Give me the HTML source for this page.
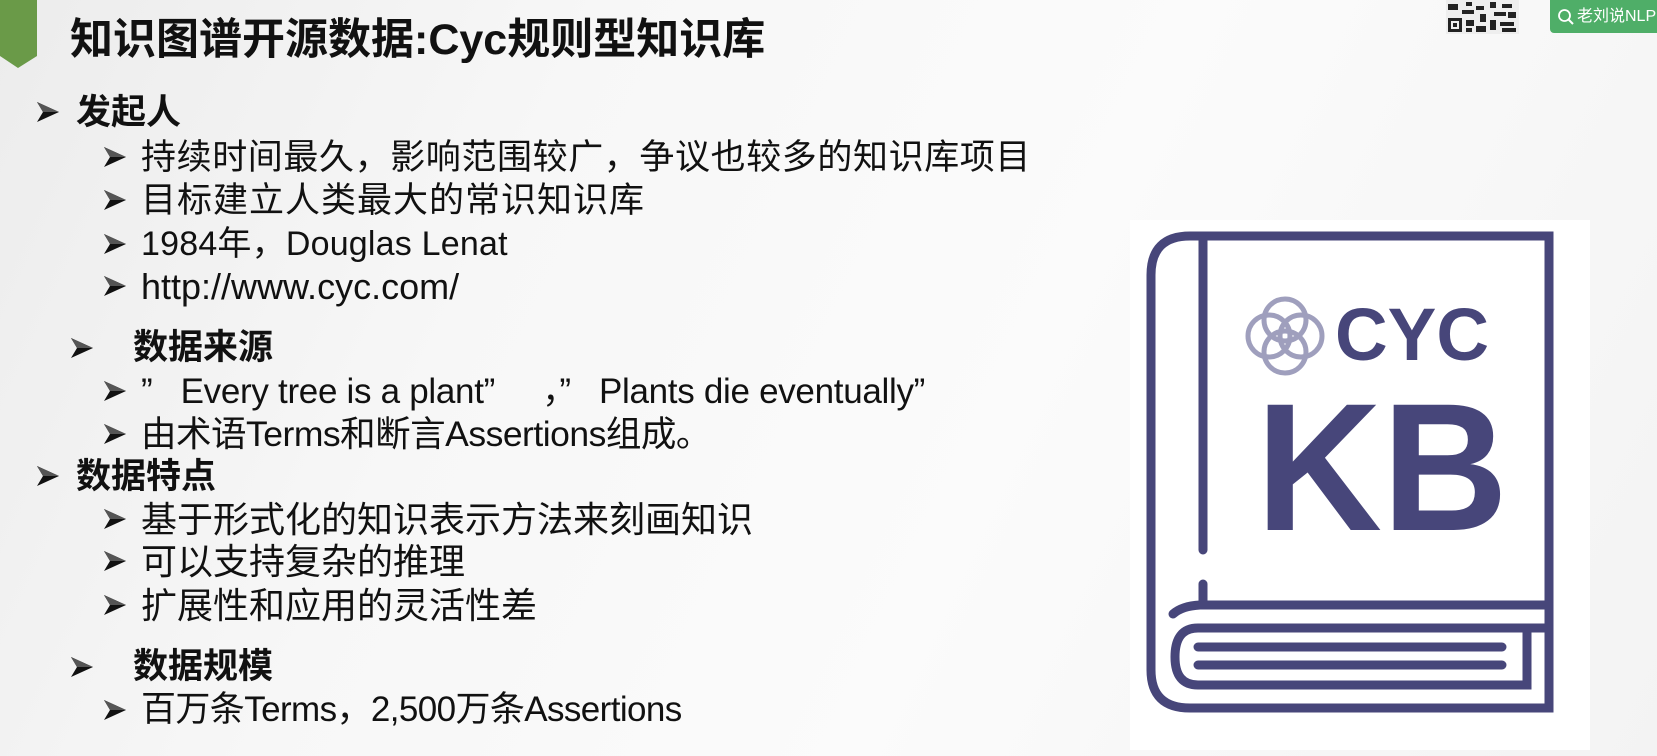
<!DOCTYPE html>
<html><head><meta charset="utf-8"><style>
body{margin:0;width:1657px;height:756px;overflow:hidden;position:relative;
background:linear-gradient(115deg,#ececec 0%,#f7f7f7 30%,#fbfbfb 60%,#f3f3f3 100%);
font-family:"Liberation Sans","Noto Sans CJK SC",sans-serif;color:#111;}
.t{position:absolute;white-space:nowrap;line-height:1;}
.a{position:absolute;width:24px;height:22px;}
.b{font-weight:bold;}
</style></head><body>
<svg width="0" height="0" style="position:absolute"><defs>
<symbol id="ar" viewBox="0 0 24 22"><path d="M1 1 L23 11 L1 21 L7 11 Z" fill="#111"/><path d="M1 1 L23 11 L7 11 Z" fill="#555"/></symbol>
</defs></svg>
<div style="position:absolute;left:0;top:0;width:37px;height:56px;background:#6a9a48"></div>
<div style="position:absolute;left:0;top:56px;width:0;height:0;border-left:18px solid transparent;border-right:19px solid transparent;border-top:12px solid #6a9a48"></div>
<div class="t b" style="left:70px;top:19px;font-size:43px;letter-spacing:0px">知识图谱开源数据:Cyc规则型知识库</div>

<!-- QR -->
<svg style="position:absolute;left:1446px;top:0" width="73" height="34">
<rect width="73" height="34" fill="#eee"/>
<g fill="#222">
<rect x="2" y="18" width="14" height="14"/><rect x="5" y="21" width="8" height="8" fill="#eee"/><rect x="7" y="23" width="4" height="4"/>
<rect x="20" y="2" width="6" height="4"/><rect x="30" y="6" width="8" height="4"/><rect x="44" y="2" width="6" height="6"/><rect x="56" y="4" width="10" height="4"/>
<rect x="2" y="4" width="10" height="6"/><rect x="16" y="10" width="12" height="4"/><rect x="34" y="14" width="6" height="8"/><rect x="48" y="12" width="12" height="4"/>
<rect x="20" y="20" width="8" height="6"/><rect x="30" y="26" width="10" height="6"/><rect x="44" y="20" width="6" height="10"/><rect x="54" y="22" width="14" height="4"/>
<rect x="62" y="12" width="8" height="6"/><rect x="56" y="28" width="14" height="4"/><rect x="20" y="28" width="6" height="4"/>
</g></svg>
<div style="position:absolute;left:1550px;top:0;width:107px;height:33px;background:#4fae68;border-radius:0 0 0 4px;color:#fff;font-size:16px;line-height:33px;white-space:nowrap">
<svg style="position:absolute;left:7px;top:8px" width="18" height="18"><circle cx="7.5" cy="7.5" r="5.5" fill="none" stroke="#fff" stroke-width="1.8"/><path d="M11.5 11.5 L16 16" stroke="#fff" stroke-width="2"/></svg>
<span style="position:absolute;left:27px;top:0">老刘说NLP</span></div>

<svg class="a" style="left:36px;top:101px"><use href="#ar"/></svg>
<div class="t b" style="left:76px;top:95px;font-size:35px">发起人</div>

<svg class="a" style="left:103px;top:146px"><use href="#ar"/></svg>
<div class="t" style="left:141px;top:140px;font-size:35px;letter-spacing:0.6px">持续时间最久，影响范围较广，争议也较多的知识库项目</div>
<svg class="a" style="left:103px;top:189px"><use href="#ar"/></svg>
<div class="t" style="left:141px;top:183px;font-size:35px;letter-spacing:1px">目标建立人类最大的常识知识库</div>
<svg class="a" style="left:103px;top:233px"><use href="#ar"/></svg>
<div class="t" style="left:141px;top:227px;font-size:34px;letter-spacing:0.2px">1984年，Douglas Lenat</div>
<svg class="a" style="left:103px;top:275px"><use href="#ar"/></svg>
<div class="t" style="left:141px;top:269px;font-size:36px">http://www.cyc.com/</div>

<svg class="a" style="left:70px;top:337px"><use href="#ar"/></svg>
<div class="t b" style="left:133px;top:330px;font-size:35px">数据来源</div>
<svg class="a" style="left:103px;top:380px"><use href="#ar"/></svg>
<div class="t" style="left:141px;top:374px;font-size:35px;letter-spacing:-0.3px">”&nbsp;&nbsp; Every tree is a plant”&nbsp;&nbsp;&nbsp;&nbsp; ，”&nbsp;&nbsp; Plants die eventually”</div>
<svg class="a" style="left:103px;top:423px"><use href="#ar"/></svg>
<div class="t" style="left:141px;top:417px;font-size:35.5px;letter-spacing:-0.5px">由术语Terms和断言Assertions组成。</div>

<svg class="a" style="left:36px;top:465px"><use href="#ar"/></svg>
<div class="t b" style="left:76px;top:459px;font-size:35px">数据特点</div>
<svg class="a" style="left:103px;top:508px"><use href="#ar"/></svg>
<div class="t" style="left:141px;top:502px;font-size:36px">基于形式化的知识表示方法来刻画知识</div>
<svg class="a" style="left:103px;top:550px"><use href="#ar"/></svg>
<div class="t" style="left:141px;top:544px;font-size:36px">可以支持复杂的推理</div>
<svg class="a" style="left:103px;top:594px"><use href="#ar"/></svg>
<div class="t" style="left:141px;top:588px;font-size:36px">扩展性和应用的灵活性差</div>

<svg class="a" style="left:70px;top:656px"><use href="#ar"/></svg>
<div class="t b" style="left:133px;top:649px;font-size:35px">数据规模</div>
<svg class="a" style="left:103px;top:699px"><use href="#ar"/></svg>
<div class="t" style="left:141px;top:692px;font-size:35px;letter-spacing:-0.6px">百万条Terms，2,500万条Assertions</div>

<svg style="position:absolute;left:0;top:0" width="1657" height="756">
<rect x="1130" y="220" width="460" height="530" fill="#fff"/>
<g fill="none" stroke="#47467a" stroke-width="9" stroke-linecap="round">
<path d="M1549 236 V708 H1190 Q1151 708 1151 670 V275 Q1151 236 1190 236 Z"/>
<path d="M1203 240 V550 M1203 584 V603"/>
<path d="M1173 614 Q1182 606 1200 605 H1549"/>
<path d="M1527 628 V685 H1198 Q1175 685 1175 657 Q1175 628 1198 628 H1549"/>
<path d="M1198 647 H1502 M1198 665 H1502"/>
</g>
<g fill="none" stroke="#8080a8" stroke-width="5" opacity=".75">
<circle cx="1285" cy="320" r="21"/><circle cx="1285" cy="352" r="21"/>
<circle cx="1269" cy="336" r="21"/><circle cx="1301" cy="336" r="21"/>
</g>
<text x="1335" y="360" font-family="Liberation Sans" font-weight="bold" font-size="74" fill="#47467a" textLength="154" lengthAdjust="spacingAndGlyphs">CYC</text>
<text x="1256" y="530" font-family="Liberation Sans" font-weight="bold" font-size="182" fill="#47467a" textLength="252" lengthAdjust="spacingAndGlyphs">KB</text>
</svg>
</body></html>
